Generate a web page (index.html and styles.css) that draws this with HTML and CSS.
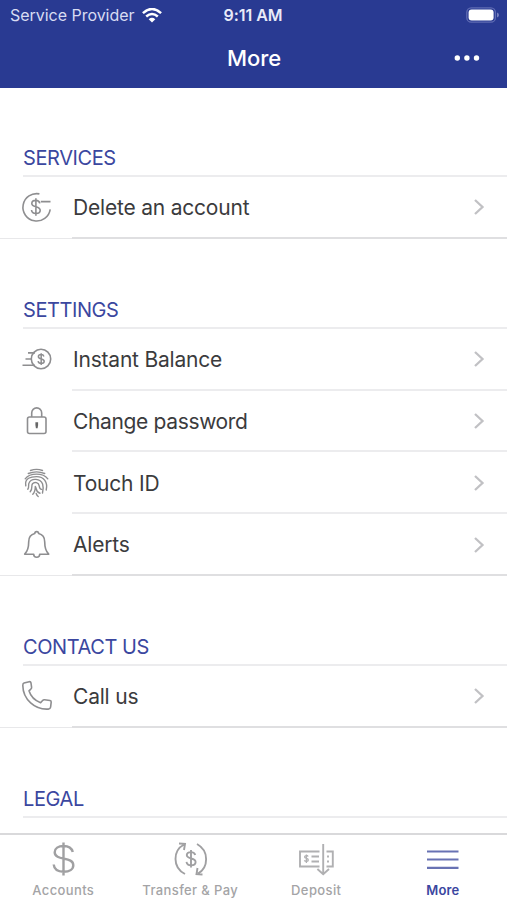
FILE: index.html
```html
<!DOCTYPE html>
<html lang="en">
<head>
<meta charset="utf-8">
<title>More</title>
<link rel="stylesheet" href="styles.css">
</head>
<body>
<div class="app">
  <header class="header">
    <div class="status">
      <div class="carrier"><span class="carrier-name">Service Provider</span>
        <svg class="wifi" width="20" height="15" viewBox="0 0 20 15" fill="none" stroke="#fff" stroke-width="2.5"><path d="M.9 5.1Q10-3.1 19.1 5.1M4.2 8.5Q10 3.4 15.8 8.5"/><path d="M6.7 11.2Q10 8.3 13.3 11.2L10 14.5Z" fill="#fff" stroke="none"/></svg>
      </div>
      <span class="clock">9:11 AM</span>
      <svg class="battery" width="34" height="16" viewBox="0 0 34 16"><rect x=".8" y=".8" width="28.6" height="14.4" rx="4.5" fill="none" stroke="#5f6bb3" stroke-width="1.3"/><rect x="2.6" y="2.6" width="25" height="10.8" rx="3" fill="#fff"/><path d="M31 5.5q2 .6 2 2.5t-2 2.500z" fill="#7680bf"/></svg>
    </div>
    <div class="navbar">
      <h1 class="title">More</h1>
      <svg class="dots" width="26" height="6" viewBox="0 0 26 6" fill="#fff"><circle cx="3.3" cy="3" r="2.7"/><circle cx="12.9" cy="3" r="2.7"/><circle cx="22.5" cy="3" r="2.7"/></svg>
    </div>
  </header>

  <main class="content">
    <section>
      <h2 class="heading heading-first">SERVICES</h2>
      <div class="row row-last">
        <svg class="icon" viewBox="0 0 32 32"><path d="M18.4 2.9A13.7 13.7 0 1 0 29.2 18.3M19.8 10.6H29.5"/><path d="M18.8 12.3c-.4-1.9-1.9-2.9-4-2.9-2.4 0-4 1.2-4 3 0 4.5 8.4 2.1 8.4 6.8 0 2-1.7 3.3-4.2 3.3-2.7 0-4.3-1.4-4.5-3.5M14.9 7.3v17.4"/></svg>
        <span class="label">Delete an account</span>
        <svg class="chevron" viewBox="0 0 12 18"><path d="M2 2l7.5 7L2 16"/></svg>
      </div>
    </section>
    <section>
      <h2 class="heading">SETTINGS</h2>
      <div class="row">
        <svg class="icon raised" viewBox="0 0 32 32"><circle cx="20" cy="16" r="9.7"/><path d="M14 9.9H7M10.500 16H4.500M14 22.200H1.500"/><path stroke-width="1.5" d="M22.900 13.400c-.4-1.200-1.300-1.800-2.700-1.800-1.600 0-2.800.8-2.800 2.100 0 3 5.800 1.400 5.800 4.500 0 1.400-1.200 2.200-3 2.200-1.700 0-2.900-.9-3.100-2.300M20.200 10.200v11.700"/></svg>
        <span class="label">Instant Balance</span>
        <svg class="chevron raised-sm" viewBox="0 0 12 18"><path d="M2 2l7.5 7L2 16"/></svg>
      </div>
      <div class="row">
        <svg class="icon" viewBox="0 0 32 32"><rect x="6.5" y="12" width="18.5" height="16.5" rx="2"/><path d="M10.7 12V7.9a5 5 0 0 1 10 0V12"/><path d="M14.400 17.200h2.700V20l-.5 3.200h-1.700l-.5-3.200z" class="solid"/></svg>
        <span class="label label-tight">Change password</span>
        <svg class="chevron" viewBox="0 0 12 18"><path d="M2 2l7.5 7L2 16"/></svg>
      </div>
      <div class="row">
        <svg class="icon" viewBox="0 0 32 32"><path class="ridges" d="M9.500 3.500Q15.500 1.300 21.500 3.500M7.300 6.500Q15.500 3.300 23.700 6.500M4.200 11.800C9 5.500 22 5.500 26.800 11.800M4.800 18.800C3.300 11 10 9.600 15.500 9.600c7.500 0 11.500 5.500 9.700 13.400M6.800 22.200C8.500 20 7 18 8 16c2.500-5.500 11.500-4.500 13.600 1 1 3 .7 6-.1 9M9.200 24.800c3-3.800.6-5.800 2.300-8 2.200-2.600 6.200-1.100 6.700 2 .3 2 .6 3.400 2.300 3.600M11.800 27.300c2-2 2.500-4.300 2.500-7.800 1.600 1.200-.2 5.500 4.700 6.700M15.200 26.500c.4 1.300 1 2.300 2 3"/></svg>
        <span class="label">Touch ID</span>
        <svg class="chevron" viewBox="0 0 12 18"><path d="M2 2l7.5 7L2 16"/></svg>
      </div>
      <div class="row row-last">
        <svg class="icon" viewBox="0 0 32 32"><path d="M13.8 4.500a1.900 1.900 0 1 1 3.800 0c4.500 1 6.100 4.200 6.100 8.300 0 6.200 1 9.500 4 12.400H18.700a3 3 0 0 1-6 0H3.700c3-2.900 4-6.200 4-12.400 0-4.100 1.600-7.300 6.100-8.300z"/></svg>
        <span class="label">Alerts</span>
        <svg class="chevron" viewBox="0 0 12 18"><path d="M2 2l7.5 7L2 16"/></svg>
      </div>
    </section>
    <section>
      <h2 class="heading">CONTACT US</h2>
      <div class="row row-last">
        <svg class="icon" viewBox="0 0 32 32"><path d="M3 3l5.200-1.300c1.300-.2 1.600.3 1.800 1.300l.6 4.300c.1 1-.2 1.500-1 2L8 10.800c1.500 5 6 9.800 11.600 12l2-2.300c.6-.7 1.200-.8 2-.7l5.400.7c1 .2 1.300.7 1.200 1.600l-.6 5c-.2 1.300-1 1.800-2.300 2C14 30 2 19.500 1.800 5.500c0-1.400.2-2.200 1.200-2.500z"/></svg>
        <span class="label">Call us</span>
        <svg class="chevron" viewBox="0 0 12 18"><path d="M2 2l7.5 7L2 16"/></svg>
      </div>
    </section>
    <section>
      <h2 class="heading">LEGAL</h2>
    </section>
  </main>

  <nav class="tabs">
    <div class="tab">
      <svg class="tab-icon" viewBox="0 0 36 36"><path stroke-width="2.4" d="M27.800 11C26.800 7.300 23.500 5 18.500 5c-5.200 0-8.800 2.400-8.800 6.200 0 9 18.600 4 18.600 13 0 4-3.800 6.500-9.600 6.500-5.900 0-9.600-2.800-10-7.200M18.500 1.500v33"/></svg>
      <span>Accounts</span>
    </div>
    <div class="tab">
      <svg class="tab-icon" viewBox="0 0 36 36"><path d="M13 33C0 26 1 9.500 12 3.500M7 2.500l6 .3-1 6.200M25 3c12.500 7 11.500 23.500 1 29.500M30.500 33.500l-6-.3 1-6.200"/><path d="M23.200 14c-.5-2-2-2.900-4.100-2.900-2.600 0-4.300 1.200-4.300 3 0 4.600 8.800 2.200 8.800 6.900 0 2-1.800 3.300-4.500 3.300-2.600 0-4.300-1.300-4.600-3.400M19 9v17.500"/></svg>
      <span>Transfer &amp; Pay</span>
    </div>
    <div class="tab">
      <svg class="tab-icon tab-icon-light" viewBox="0 0 36 36"><path d="M21.500 10.500H2v15h19.500M28.500 10.500h6.300v15h-6.300M25.200 3v30M19.400 28l5.800 5.300 5.800-5.300M13.500 15.500H21M13.500 20.500H21M30 14.500v2M30 19.500v2"/><path stroke-width="1.3" d="M10.200 15.500c-1-1.500-3.700-1.200-3.600.5.200 2 3.700 1 3.700 3 0 1.700-3 1.900-4 .3M8.400 13.500v8.500"/></svg>
      <span>Deposit</span>
    </div>
    <div class="tab tab-active">
      <svg class="tab-icon" viewBox="0 0 36 36"><path stroke-width="2.2" d="M2 10.500h31.500M2 18.500h31.500M2 26.800h31.500"/></svg>
      <span>More</span>
    </div>
  </nav>
</div>
</body>
</html>
```
FILE: styles.css
```css
* { box-sizing: border-box; }
body { margin: 0; background: #fff; font-family: Inter, "Liberation Sans", sans-serif; }
svg { display: block; flex: none; }
h1, h2 { margin: 0; font-weight: 400; }
.app { width: 507px; height: 900px; display: flex; flex-direction: column; overflow: hidden; }
.header { flex: none; height: 88px; background: #293a92; color: #fff; }
.status { height: 30px; display: grid; grid-template-columns: 1fr auto 1fr; align-items: center; padding: 0 8px 0 10px; }
.carrier { display: flex; align-items: center; gap: 7px; font-size: 16px; letter-spacing: -.03px; color: #d8dcf2; }
.clock { font-size: 16px; font-weight: 600; letter-spacing: -.06px; margin-left: -3px; color: #e8eaf8; }
.battery { justify-self: end; margin: -1px -1px 0 0; }
.navbar { height: 56px; display: grid; grid-template-columns: 1fr auto 1fr; align-items: center; padding: 0 27px 0 28px; }
.title { grid-column: 2; font-size: 22px; font-weight: 500; letter-spacing: -.1px; margin-top: -1px; }
.dots { justify-self: end; margin-top: -1px; }
.content { flex: 1; min-height: 0; overflow: hidden; }
.heading { height: 90px; margin-left: 23px; padding-bottom: 4px; border-bottom: 2px solid #ececee; display: flex; align-items: flex-end; font-size: 20px; line-height: 26px; letter-spacing: -.42px; color: #3b479f; }
.heading-first { height: 89px; }
.row { height: 61.8px; display: grid; grid-template-columns: 50px 1fr 36px; align-items: center; padding-left: 21px; position: relative; font-size: 21px; letter-spacing: -.2px; color: #3b3b3d; }
.row::after { content: ""; position: absolute; left: 72px; right: 0; bottom: 0; height: 2px; background: #ececee; }
.row-last { border-bottom: 1px solid #e8e8ea; }
.row-last::after { bottom: -1px; background: #dfdfe1; }
.label { padding-left: 2px; white-space: nowrap; }
.label-tight { letter-spacing: -.35px; }
.icon { width: 32px; height: 32px; fill: none; stroke: #8e8e90; stroke-width: 1.6; stroke-linejoin: round; }
.icon .solid { fill: #666; stroke: none; }
.icon .ridges { stroke-width: 1.4; stroke-linecap: round; }
.raised { margin-top: -2px; }
.chevron { width: 12px; height: 18px; margin-left: 2px; fill: none; stroke: #c1c1c4; stroke-width: 2.3; }
.raised-sm { margin-top: -1px; }
.tabs { flex: none; height: 67px; border-top: 2px solid #d9d9db; display: grid; grid-template-columns: repeat(4, 126.5px); font-size: 13px; font-weight: 500; letter-spacing: .38px; color: #a4a4a6; }
.tab { display: flex; flex-direction: column; align-items: center; padding-top: 6px; white-space: nowrap; line-height: 20px; }
.tab-icon { width: 36px; height: 36px; margin-bottom: 3px; fill: none; stroke: #a0a0a2; stroke-width: 1.9; }
.tab-icon-light { stroke: #b0b0b2; }
.tab:nth-child(2) { padding-left: 1px; }
.tab-active { color: #3a46a0; font-weight: 600; letter-spacing: .1px; }
.tab-active .tab-icon { stroke: #6872b3; }
```
